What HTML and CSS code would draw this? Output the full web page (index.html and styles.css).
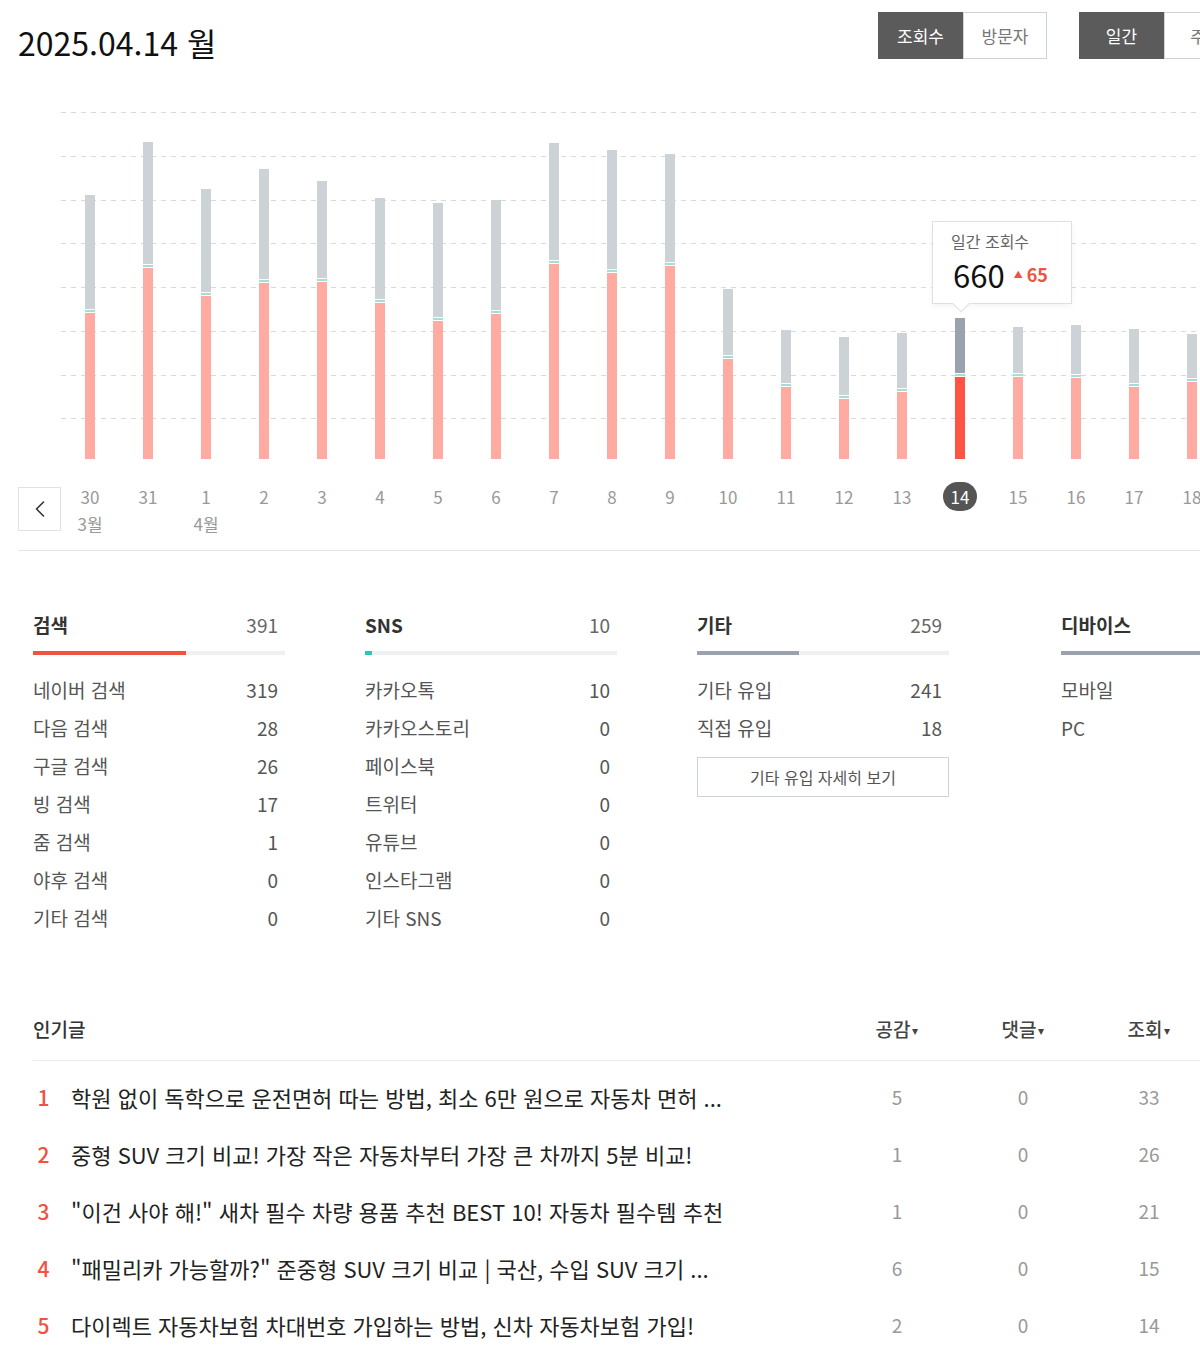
FILE: index.html
```html
<!DOCTYPE html>
<html lang="ko">
<head>
<meta charset="utf-8">
<title>통계</title>
<link rel="stylesheet" href="styles.css">
</head>
<body>
<div class="page">
  <header class="top">
    <h1 class="date">2025.04.14 월</h1>
    <div class="toggles">
      <div class="toggle">
        <span class="tbtn on">조회수</span><span class="tbtn">방문자</span>
      </div>
      <div class="toggle">
        <span class="tbtn on">일간</span><span class="tbtn">주간</span>
      </div>
    </div>
  </header>

  <section class="chart">
    <div class="plot">
      <div class="gridlines">
        <div class="gl"></div><div class="gl"></div><div class="gl"></div><div class="gl"></div>
        <div class="gl"></div><div class="gl"></div><div class="gl"></div><div class="gl"></div>
      </div>
      <div class="bars">
        <div class="col"><div class="bar"><div class="g" style="height:114px"></div><div class="sep"></div><div class="p" style="height:146px"></div></div></div>
        <div class="col"><div class="bar"><div class="g" style="height:122px"></div><div class="sep"></div><div class="p" style="height:191px"></div></div></div>
        <div class="col"><div class="bar"><div class="g" style="height:103px"></div><div class="sep"></div><div class="p" style="height:163px"></div></div></div>
        <div class="col"><div class="bar"><div class="g" style="height:110px"></div><div class="sep"></div><div class="p" style="height:176px"></div></div></div>
        <div class="col"><div class="bar"><div class="g" style="height:97px"></div><div class="sep"></div><div class="p" style="height:177px"></div></div></div>
        <div class="col"><div class="bar"><div class="g" style="height:101px"></div><div class="sep"></div><div class="p" style="height:156px"></div></div></div>
        <div class="col"><div class="bar"><div class="g" style="height:114px"></div><div class="sep"></div><div class="p" style="height:138px"></div></div></div>
        <div class="col"><div class="bar"><div class="g" style="height:110px"></div><div class="sep"></div><div class="p" style="height:145px"></div></div></div>
        <div class="col"><div class="bar"><div class="g" style="height:117px"></div><div class="sep"></div><div class="p" style="height:195px"></div></div></div>
        <div class="col"><div class="bar"><div class="g" style="height:119px"></div><div class="sep"></div><div class="p" style="height:186px"></div></div></div>
        <div class="col"><div class="bar"><div class="g" style="height:108px"></div><div class="sep"></div><div class="p" style="height:193px"></div></div></div>
        <div class="col"><div class="bar"><div class="g" style="height:66px"></div><div class="sep"></div><div class="p" style="height:100px"></div></div></div>
        <div class="col"><div class="bar"><div class="g" style="height:53px"></div><div class="sep"></div><div class="p" style="height:72px"></div></div></div>
        <div class="col"><div class="bar"><div class="g" style="height:58px"></div><div class="sep"></div><div class="p" style="height:60px"></div></div></div>
        <div class="col"><div class="bar"><div class="g" style="height:55px"></div><div class="sep"></div><div class="p" style="height:67px"></div></div></div>
        <div class="col"><div class="bar active"><div class="g" style="height:55px"></div><div class="sep"></div><div class="p" style="height:82px"></div></div></div>
        <div class="col"><div class="bar"><div class="g" style="height:46px"></div><div class="sep"></div><div class="p" style="height:82px"></div></div></div>
        <div class="col"><div class="bar"><div class="g" style="height:49px"></div><div class="sep"></div><div class="p" style="height:81px"></div></div></div>
        <div class="col"><div class="bar"><div class="g" style="height:54px"></div><div class="sep"></div><div class="p" style="height:72px"></div></div></div>
        <div class="col"><div class="bar"><div class="g" style="height:44px"></div><div class="sep"></div><div class="p" style="height:77px"></div></div></div>
      </div>
      <div class="tooltip">
        <div class="tt-label">일간 조회수</div>
        <div class="tt-value"><span class="tt-num">660</span><span class="tt-diff"><span class="tri">▲</span>65</span></div>
      </div>
    </div>

    <div class="axis">
      <button class="prev" type="button" aria-label="이전">
        <svg width="16" height="18" viewBox="0 0 16 18"><path d="M11.5 2 L4.5 9 L11.5 16" fill="none" stroke="#333" stroke-width="1.6" stroke-linecap="round" stroke-linejoin="round"/></svg>
      </button>
      <div class="labels">
        <div class="lc"><span class="d">30</span><span class="m">3월</span></div>
        <div class="lc"><span class="d">31</span></div>
        <div class="lc"><span class="d">1</span><span class="m">4월</span></div>
        <div class="lc"><span class="d">2</span></div>
        <div class="lc"><span class="d">3</span></div>
        <div class="lc"><span class="d">4</span></div>
        <div class="lc"><span class="d">5</span></div>
        <div class="lc"><span class="d">6</span></div>
        <div class="lc"><span class="d">7</span></div>
        <div class="lc"><span class="d">8</span></div>
        <div class="lc"><span class="d">9</span></div>
        <div class="lc"><span class="d">10</span></div>
        <div class="lc"><span class="d">11</span></div>
        <div class="lc"><span class="d">12</span></div>
        <div class="lc"><span class="d">13</span></div>
        <div class="lc"><span class="d sel">14</span></div>
        <div class="lc"><span class="d">15</span></div>
        <div class="lc"><span class="d">16</span></div>
        <div class="lc"><span class="d">17</span></div>
        <div class="lc"><span class="d">18</span></div>
      </div>
    </div>
  </section>

  <section class="stats">
    <div class="sc">
      <div class="sh"><span class="st">검색</span><span class="sn">391</span></div>
      <div class="track"><div class="fill red" style="width:153px"></div></div>
      <ul class="rows">
        <li><span>네이버 검색</span><span class="v">319</span></li>
        <li><span>다음 검색</span><span class="v">28</span></li>
        <li><span>구글 검색</span><span class="v">26</span></li>
        <li><span>빙 검색</span><span class="v">17</span></li>
        <li><span>줌 검색</span><span class="v">1</span></li>
        <li><span>야후 검색</span><span class="v">0</span></li>
        <li><span>기타 검색</span><span class="v">0</span></li>
      </ul>
    </div>
    <div class="sc">
      <div class="sh"><span class="st">SNS</span><span class="sn">10</span></div>
      <div class="track"><div class="fill teal" style="width:7px"></div></div>
      <ul class="rows">
        <li><span>카카오톡</span><span class="v">10</span></li>
        <li><span>카카오스토리</span><span class="v">0</span></li>
        <li><span>페이스북</span><span class="v">0</span></li>
        <li><span>트위터</span><span class="v">0</span></li>
        <li><span>유튜브</span><span class="v">0</span></li>
        <li><span>인스타그램</span><span class="v">0</span></li>
        <li><span>기타 SNS</span><span class="v">0</span></li>
      </ul>
    </div>
    <div class="sc">
      <div class="sh"><span class="st">기타</span><span class="sn">259</span></div>
      <div class="track"><div class="fill gray" style="width:102px"></div></div>
      <ul class="rows">
        <li><span>기타 유입</span><span class="v">241</span></li>
        <li><span>직접 유입</span><span class="v">18</span></li>
      </ul>
      <button class="more" type="button">기타 유입 자세히 보기</button>
    </div>
    <div class="sc device">
      <div class="sh"><span class="st">디바이스</span></div>
      <div class="track"><div class="fill gray" style="width:100%"></div></div>
      <ul class="rows">
        <li><span>모바일</span></li>
        <li><span>PC</span></li>
      </ul>
    </div>
  </section>

  <section class="popular">
    <div class="ph">
      <span class="pt">인기글</span>
      <span class="pc">공감<span class="caret">▾</span></span>
      <span class="pc">댓글<span class="caret">▾</span></span>
      <span class="pc">조회<span class="caret">▾</span></span>
    </div>
    <ol class="plist">
      <li><span class="rk">1</span><span class="ttl">학원 없이 독학으로 운전면허 따는 방법, 최소 6만 원으로 자동차 면허 ...</span><span class="pv">5</span><span class="pv">0</span><span class="pv">33</span></li>
      <li><span class="rk">2</span><span class="ttl">중형 SUV 크기 비교! 가장 작은 자동차부터 가장 큰 차까지 5분 비교!</span><span class="pv">1</span><span class="pv">0</span><span class="pv">26</span></li>
      <li><span class="rk">3</span><span class="ttl">"이건 사야 해!" 새차 필수 차량 용품 추천 BEST 10! 자동차 필수템 추천</span><span class="pv">1</span><span class="pv">0</span><span class="pv">21</span></li>
      <li><span class="rk">4</span><span class="ttl">"패밀리카 가능할까?" 준중형 SUV 크기 비교 | 국산, 수입 SUV 크기 ...</span><span class="pv">6</span><span class="pv">0</span><span class="pv">15</span></li>
      <li><span class="rk">5</span><span class="ttl">다이렉트 자동차보험 차대번호 가입하는 방법, 신차 자동차보험 가입!</span><span class="pv">2</span><span class="pv">0</span><span class="pv">14</span></li>
    </ol>
  </section>
</div>
</body>
</html>
```

FILE: styles.css
```css
html, body {
  margin: 0;
  padding: 0;
  background: #fff;
  overflow: hidden;
}
body {
  font-family: "Noto Sans CJK KR", "Noto Sans", sans-serif;
  color: #222;
}
.page {
  width: 1200px;
  overflow: hidden;
}

/* header */
.top {
  display: grid;
  grid-template-columns: 878px auto;
  height: 100px;
}
.date {
  margin: 20px 0 0 18px;
  font-size: 32px;
  line-height: 44px;
  font-weight: 400;
  color: #111;
}
.toggles {
  display: flex;
  gap: 32px;
  margin-top: 12px;
  width: 400px;
}
.toggle {
  display: flex;
  height: 47px;
}
.tbtn {
  box-sizing: border-box;
  width: 84px;
  height: 47px;
  display: flex;
  align-items: center;
  justify-content: center;
  font-size: 17px;
  color: #777;
  border: 1px solid #cdd3da;
  background: #fff;
}
.tbtn.on {
  background: #5b5b5b;
  border-color: #5b5b5b;
  color: #fff;
  width: 85px;
}

/* chart */
.chart {
  margin-left: 18px;
}
.plot {
  position: relative;
  margin-left: 43px;
  height: 359px;
}
.gridlines {
  position: absolute;
  left: 0;
  right: 0;
  top: 12px;
  display: flex;
  flex-direction: column;
}
.gl {
  height: 43.75px;
  background-image: linear-gradient(to right, #d9d9d9 0 5px, transparent 5px 10px);
  background-size: 10px 1px;
  background-repeat: repeat-x;
  background-position: 0 0;
}
.bars {
  position: relative;
  display: flex;
  align-items: flex-end;
  height: 359px;
}
.col {
  flex: 0 0 58px;
  display: flex;
  justify-content: center;
  align-items: flex-end;
}
.bar {
  width: 10px;
  display: flex;
  flex-direction: column;
}
.bar .g { background: #cdd2d7; }
.bar .p { background: #ffaba1; }
.bar .sep {
  height: 4px;
  background: linear-gradient(to bottom, #fff 0 1px, #a6ddd6 1px 3px, #fff 3px 4px);
}
.bar.active .g { background: #9aa3ad; }
.bar.active .p { background: #ff5444; }

.tooltip {
  position: absolute;
  left: 871px;
  top: 121px;
  box-sizing: border-box;
  width: 140px;
  height: 83px;
  background: #fff;
  border: 1px solid #dde1e7;
  box-shadow: 0 2px 6px rgba(0, 0, 0, 0.05);
  padding: 9px 0 0 18px;
}
.tooltip::after {
  content: "";
  position: absolute;
  left: 22px;
  width: 11px;
  height: 11px;
  background: #fff;
  border-right: 1px solid #dde1e7;
  border-bottom: 1px solid #dde1e7;
  transform: rotate(45deg);
  bottom: -6.5px;
}
.tt-label {
  font-size: 16px;
  line-height: 20px;
  color: #666;
}
.tt-value {
  display: flex;
  align-items: baseline;
  margin-top: 7px;
}
.tt-num {
  font-size: 31px;
  line-height: 34px;
  color: #111;
  margin-left: 2px;
}
.tt-diff {
  margin-left: 9px;
  font-size: 18px;
  line-height: 20px;
  font-weight: 700;
  color: #f0533f;
  position: relative;
  top: -6px;
}
.tri {
  font-size: 9px;
  position: relative;
  top: -4px;
  margin-right: 4px;
}

.axis {
  display: flex;
  height: 91px;
  border-bottom: 1px solid #e6e6e6;
}
.prev {
  box-sizing: border-box;
  flex: 0 0 43px;
  height: 44px;
  margin-top: 28px;
  padding: 0;
  border: 1px solid #dfe3e8;
  background: #fff;
  display: flex;
  align-items: center;
  justify-content: center;
}
.labels {
  display: flex;
  padding-top: 23px;
}
.lc {
  flex: 0 0 58px;
  display: flex;
  flex-direction: column;
  align-items: center;
}
.lc .d {
  font-size: 17px;
  line-height: 29px;
  height: 29px;
  color: #999;
  padding: 0 6px;
}
.lc .d.sel {
  background: #555;
  color: #fff;
  border-radius: 15px;
  min-width: 22px;
  text-align: center;
}
.lc .m {
  font-size: 17px;
  line-height: 26px;
  color: #999;
}

/* stats */
.stats {
  display: grid;
  grid-template-columns: 252px 252px 252px 1fr;
  column-gap: 80px;
  padding: 58px 0 0 33px;
}
.sc.device {
  margin-left: 32px;
}
.sh {
  display: flex;
  justify-content: space-between;
  align-items: center;
  height: 30px;
  padding-right: 7px;
}
.st {
  font-size: 19px;
  font-weight: 700;
  color: #333;
}
.sn {
  font-size: 19px;
  color: #666;
}
.track {
  height: 4px;
  margin-top: 12px;
  background: #f0f0f0;
}
.fill { height: 4px; }
.fill.red { background: #f0533f; }
.fill.teal { background: #2cc7b4; }
.fill.gray { background: #9aa3ad; }
.rows {
  list-style: none;
  margin: 15px 0 0;
  padding: 0;
}
.rows li {
  display: flex;
  justify-content: space-between;
  align-items: center;
  height: 38px;
  font-size: 19px;
  color: #555;
  padding-right: 7px;
}
.rows .v {
  font-size: 19px;
}
.more {
  display: block;
  box-sizing: border-box;
  width: 252px;
  height: 40px;
  margin-top: 11px;
  border: 1px solid #cdd3db;
  background: #fff;
  font-family: inherit;
  font-size: 16px;
  color: #555;
  padding: 0;
}

/* popular */
.popular {
  margin: 61px 0 0 33px;
  width: 1179px;
}
.ph {
  display: flex;
  align-items: center;
  height: 63px;
  border-bottom: 1px solid #ececec;
}
.pt {
  flex: 1;
  font-size: 19px;
  font-weight: 500;
  color: #333;
}
.pc {
  flex: 0 0 126px;
  text-align: center;
  font-size: 19px;
  font-weight: 500;
  color: #444;
}
.caret {
  font-size: 12px;
  margin-left: 2px;
  position: relative;
  top: -2px;
}
.plist {
  list-style: none;
  margin: 0;
  padding: 7px 0 0;
}
.plist li {
  display: flex;
  align-items: center;
  height: 57px;
}
.rk {
  flex: 0 0 21px;
  text-align: center;
  font-size: 21px;
  font-weight: 500;
  color: #f0533f;
}
.ttl {
  flex: 1;
  margin-left: 17px;
  font-size: 22px;
  color: #222;
  white-space: nowrap;
  overflow: hidden;
}
.pv {
  flex: 0 0 126px;
  text-align: center;
  font-size: 19px;
  color: #999;
}
```
